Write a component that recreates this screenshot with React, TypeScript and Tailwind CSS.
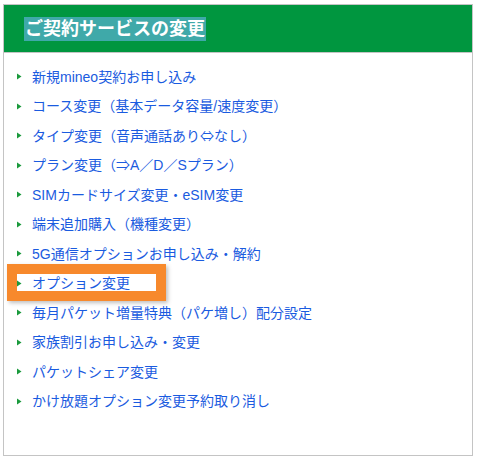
import React from 'react';

const cjk = '"Noto Sans CJK JP", sans-serif';

const items: React.ReactNode[] = [
  '新規mineo契約お申し込み',
  'コース変更（基本データ容量/速度変更）',
  <>
    タイプ変更（音声通話あり<span style={{ fontFamily: cjk }}>⇔</span>なし）
  </>,
  'プラン変更（⇒A／D／Sプラン）',
  'SIMカードサイズ変更・eSIM変更',
  '端末追加購入（機種変更）',
  '5G通信オプションお申し込み・解約',
  'オプション変更',
  '毎月パケット増量特典（パケ増し）配分設定',
  '家族割引お申し込み・変更',
  'パケットシェア変更',
  'かけ放題オプション変更予約取り消し',
];

const Arrow: React.FC = () => (
  <svg width="5" height="7" viewBox="0 0 5 7" className="shrink-0">
    <path d="M0 0.5 L4.5 3.5 L0 6.5 Z" fill="#1a9a3c" />
  </svg>
);

const App: React.FC = () => {
  return (
    <div
      className="w-[477px] h-[462px] bg-white pt-[4px] pl-[3px]"
      style={{ fontFamily: '"Liberation Sans", "Noto Sans CJK JP", sans-serif' }}
    >
      <div className="w-[470px] h-[452px] border border-[#c4c4c4]">
        {/* Header */}
        <div className="h-[48px] bg-[#00963f] border-b border-[#c4c4c4] flex items-center pl-[20px]">
          <h2 className="bg-[#3fa9a9] text-white font-bold text-[18px] leading-[24px] px-[1px]">
            ご契約サービスの変更
          </h2>
        </div>

        {/* Links */}
        <ul className="pt-[9px] pl-[13px]">
          {items.map((label, i) => (
            <li key={i} className="relative h-[29.5px] flex items-center gap-[10px]">
              {i === 7 && (
                <div className="absolute left-[-10px] top-[-5px] w-[159px] h-[37px] border-[10px] border-[#f7892c] shadow-[2px_2px_4px_rgba(0,0,0,0.25)]" />
              )}
              <Arrow />
              <a href="#" className="text-[14px] text-[#1a5be0] leading-none whitespace-nowrap">
                {label}
              </a>
            </li>
          ))}
        </ul>
      </div>
    </div>
  );
};

export default App;
